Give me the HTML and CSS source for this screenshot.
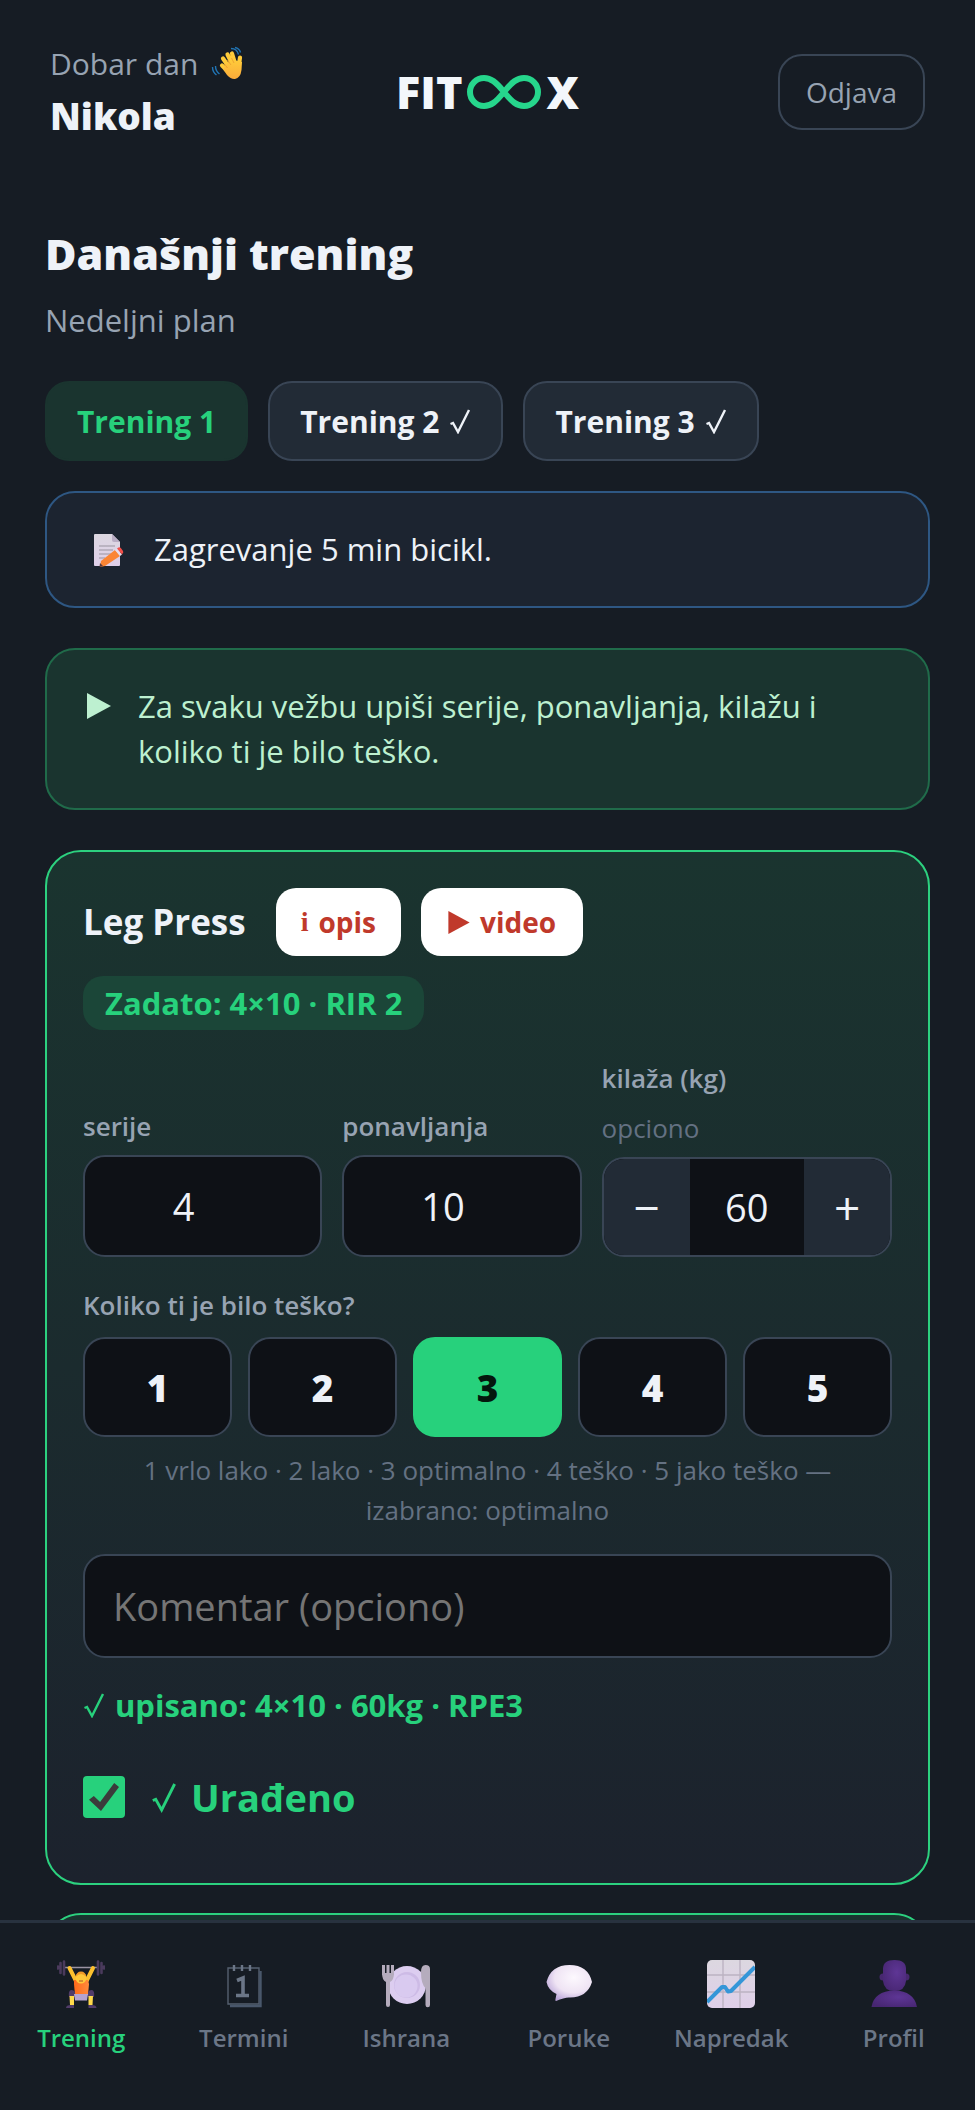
FILE: index.html
```html
<!DOCTYPE html>
<html lang="sr-Latn">
<head>
<meta charset="utf-8">
<meta name="viewport" content="width=device-width, initial-scale=1">
<title>Fitoox – Današnji trening</title>
<link rel="stylesheet" href="styles.css">
</head>
<body>
<svg class="defs" aria-hidden="true">
  <defs>
    <symbol id="tick" viewBox="0 0 22 26"><path d="M1.500 16 4 15 9 24 20 2" fill="none" stroke="currentColor" stroke-width="2.400"/></symbol>
    <linearGradient id="hand" x1="0" y1="0" x2="0" y2="1"><stop offset="0" stop-color="#ffcb3a"/><stop offset="1" stop-color="#fbaa3a"/></linearGradient>
    <linearGradient id="shirt" x1="0" y1="0" x2="1" y2="0"><stop offset="0" stop-color="#ff6a1a"/><stop offset="1" stop-color="#ff8b3d"/></linearGradient>
    <linearGradient id="paper" x1="0" y1="0" x2="0" y2="1"><stop offset="0" stop-color="#dcd7e0"/><stop offset="1" stop-color="#dfcfe9"/></linearGradient>
    <radialGradient id="bubble" cx=".6" cy=".35" r=".7"><stop offset="0" stop-color="#fdf9fe"/><stop offset=".6" stop-color="#efe4f4"/><stop offset="1" stop-color="#b9a4d8"/></radialGradient>
    <radialGradient id="bust" cx=".6" cy=".4" r=".7"><stop offset="0" stop-color="#5e3695"/><stop offset="1" stop-color="#472672"/></radialGradient>
  </defs>
</svg>
<div class="app">
  <header class="top">
    <div class="greeting">
      <p class="hello">Dobar dan
        <svg class="wave" viewBox="0 0 32 32" role="img" aria-label="Mahanje">
          <path d="m12 17.500 7 7M13 10.500l7 10M17.500 6.500l6 12M22 5.500l4 13M30 9.500 28.500 20" fill="none" stroke="#ffcb3a" stroke-width="4.200" stroke-linecap="round"/>
          <path d="m15 17 6-5 8 1 3 1-.5 8q-1 8-6.500 9-4 .5-8-4l-3.500-5Z" fill="url(#hand)"/>
          <path d="m14.500 16 3 4M17.500 12l3.500 5M21.500 10l2.500 5" fill="none" stroke="#eda030" stroke-width=".9"/>
          <path d="M21 .500q6 0 7.500 6M25-.500q4.500 1 5.500 5M5.500 18q0 5 4 8M2.500 19q0 5 4 8" fill="none" stroke="#2175b5" stroke-width="1.400"/>
        </svg>
      </p>
      <p class="name">Nikola</p>
    </div>
    <div class="logo" aria-label="FITOOX">
      <span>FIT</span>
      <svg class="loop" viewBox="0 0 76 34" aria-hidden="true"><path d="M38 17C30 7 25 3 18 3a14 14 0 0 0 0 28C25 31 30 27 38 17S51 3 58 3a14 14 0 0 1 0 28C51 31 46 27 38 17Z" fill="none" stroke="#26d68c" stroke-width="6"/></svg>
      <span>X</span>
    </div>
    <button class="logout" type="button">Odjava</button>
  </header>

  <main class="content">
    <h1>Današnji trening</h1>
    <p class="sub">Nedeljni plan</p>
    <div class="tabs">
      <button class="tab active" type="button">Trening 1</button>
      <button class="tab" type="button">Trening 2 <svg class="tick"><use href="#tick"/></svg></button>
      <button class="tab" type="button">Trening 3 <svg class="tick"><use href="#tick"/></svg></button>
    </div>

    <section class="note">
      <svg class="memo" viewBox="0 0 32 36" aria-hidden="true">
        <path d="M3 2h17l8 8v23q0 1-1 1H3q-1 0-1-1V3q0-1 1-1Z" fill="url(#paper)"/>
        <path d="M20 2v6q0 2 2 2h6Z" fill="#b9adc4"/>
        <path d="M7 14h16M7 18h14M7 22h12M7 26h6" stroke="#9a94a0" stroke-width="1.200"/>
        <path d="M9 29 23 18l5 6-15 10-5 1Z" fill="#fb8534"/><path d="m23 18 2-1.500 5 6L28 24Z" fill="#e8ddea"/><path d="m25 16.500 1.500-1q1.500-.5 2.500.8l2 2.700q.8 1.500-.5 2.500L30 22.500Z" fill="#f3504a"/><path d="m8 31 3 3-3.500 1Z" fill="#5c3b3b"/>
      </svg>
      <p>Zagrevanje 5 min bicikl.</p>
    </section>

    <section class="tip">
      <svg class="play" viewBox="0 0 24 26" aria-hidden="true"><path d="M0 0 24 13 0 26Z" fill="currentColor"/></svg>
      <p>Za svaku vežbu upiši serije, ponavljanja, kilažu i koliko ti je bilo teško.</p>
    </section>

    <article class="card">
      <div class="title">
        <h2>Leg Press</h2>
        <button class="chip" type="button"><span class="i">i</span> opis</button>
        <button class="chip video" type="button"><svg class="play-small" viewBox="0 0 24 26" aria-hidden="true"><path d="M0 0 24 13 0 26Z" fill="currentColor"/></svg>video</button>
      </div>
      <p class="target">Zadato: 4×10 · RIR 2</p>

      <div class="fields">
        <div class="field">
          <label for="sets">serije</label>
          <input class="box number" id="sets" type="text" inputmode="numeric" value="4">
        </div>
        <div class="field">
          <label for="reps">ponavljanja</label>
          <input class="box number" id="reps" type="text" inputmode="numeric" value="10">
        </div>
        <div class="field">
          <label for="kg">kilaža (kg)<span class="optional">opciono</span></label>
          <div class="stepper">
            <button type="button" aria-label="Manje">−</button>
            <input id="kg" type="text" inputmode="decimal" value="60">
            <button type="button" aria-label="Više">+</button>
          </div>
        </div>
      </div>

      <p class="question">Koliko ti je bilo teško?</p>
      <div class="scale">
        <button type="button">1</button>
        <button type="button">2</button>
        <button class="picked" type="button">3</button>
        <button type="button">4</button>
        <button type="button">5</button>
      </div>
      <p class="legend">1 vrlo lako · 2 lako · 3 optimalno · 4 teško · 5 jako teško — izabrano: optimalno</p>
      <input class="box comment" type="text" placeholder="Komentar (opciono)" aria-label="Komentar (opciono)">
      <p class="saved"><svg class="tick"><use href="#tick"/></svg> upisano: 4×10 · 60kg · RPE3</p>
      <label class="done"><input type="checkbox" checked><span><svg class="tick"><use href="#tick"/></svg> Urađeno</span></label>
    </article>
    <article class="card"></article>
  </main>

  <nav class="nav">
    <a class="current" href="#trening">
      <svg viewBox="0 0 48 48" aria-hidden="true">
        <path d="M6 7.500h36" stroke="#9a93a3" stroke-width="1.600"/>
        <path d="M1 6.500v2M3.500 3v10M7 1.500v13M47 6.500v2M44.500 3v10M41 1.500v13" stroke="#4a3a5c" stroke-width="2.600" stroke-linecap="round"/>
        <path d="m12.500 8 6.500 13M36 8l-6.500 13" stroke="#fcc02e" stroke-width="4" stroke-linecap="round"/>
        <path d="M17 20h14l1 4-1 11H18l-1-11Z" fill="url(#shirt)"/>
        <circle cx="24" cy="18" r="5.500" fill="#ffc83a"/><path d="M18.500 17q1-5.500 5.500-5.500t5.500 5.500q-3-3-5.500-3t-5.500 3Z" fill="#f09b28"/><path d="M22 21h4" stroke="#a6542a"/>
        <path d="M12 37q-1-6 2-7 4 0 4 3v4ZM37 37q1-6-2-7-4 0-4 3v4Z" fill="#513c69"/>
        <path d="M17 34h14l-1 6.500H18Z" fill="#b6a3cf"/>
        <path d="M12.500 36h4.500v9h-4ZM36 36h-4.500v9h4Z" fill="#ffd94a"/>
        <path d="M9 48q0-3 5-3h3v3ZM39.500 48q0-3-5-3h-3v3Z" fill="#513c69"/>
      </svg>
      <span>Trening</span>
    </a>
    <a href="#termini">
      <svg viewBox="0 0 48 48" aria-hidden="true">
        <path d="M8 8h31v36H8Z" fill="none" stroke="#566070" stroke-width="1.400"/>
        <path d="M40.500 11v35H10" fill="none" stroke="#49576b" stroke-width="2.400"/>
        <path d="M14 5v6M22 5v6M30 5v6" stroke="#6b7687" stroke-width="2.400"/>
        <path d="M17 20.500 23 18v17M16 35.500h13" fill="none" stroke="#6b7687" stroke-width="3.600"/>
      </svg>
      <span>Termini</span>
    </a>
    <a href="#ishrana">
      <svg viewBox="0 0 48 48" aria-hidden="true">
        <circle cx="25" cy="25" r="19" fill="#dccdf0"/><circle cx="25" cy="25" r="13" fill="#cdbbe6"/><circle cx="24" cy="26" r="11.500" fill="#d9caf0"/>
        <path d="M1.500 5v10M6 5v10M10.500 5v10" stroke="#b5acbd" stroke-width="3"/><path d="M0 13h12q0 7-4 9v23a2 2 0 0 1-4 0V22q-4-2-4-9Z" fill="#b5acbd"/>
        <path d="M39 12q0-7 4.500-7T48 9v36a2 2 0 0 1-4.500 0V28Q39 24 39 12Z" fill="#b5acbd"/>
      </svg>
      <span>Ishrana</span>
    </a>
    <a href="#poruke">
      <svg viewBox="0 0 48 48" aria-hidden="true"><path d="M1.500 22Q6 5 24.500 5T47 22Q42 38 24 37.500q-5 0-13 3.500-1 0-.5-2l1-5Q3 30 1.500 22Z" fill="url(#bubble)"/></svg>
      <span>Poruke</span>
    </a>
    <a href="#napredak">
      <svg viewBox="0 0 48 48" aria-hidden="true"><rect width="48" height="48" rx="5" fill="url(#paper)"/><path d="M16 0v48M33 0v48M0 15h48M0 32h48" stroke="#bcb3c2" stroke-width="1.400"/><path d="M0 42 15 27l3 0 3 4.500 3-.5L48 7" fill="none" stroke="#3596d8" stroke-width="4" stroke-linejoin="round"/></svg>
      <span>Napredak</span>
    </a>
    <a href="#profil">
      <svg viewBox="0 0 48 48" aria-hidden="true"><circle cx="13" cy="17" r="3.500" fill="#47286f"/><circle cx="36" cy="17" r="3.500" fill="#47286f"/><path d="M13 9q0-9 11.500-9T36 9v12q-1 10-11.500 10T13 21Z" fill="url(#bust)"/><path d="M1.500 47Q4 31 24.500 30.500 44 31 47 47Z" fill="url(#bust)"/></svg>
      <span>Profil</span>
    </a>
  </nav>
</div>
</body>
</html>
```

FILE: styles.css
```css
* { box-sizing: border-box; }
body, h1, h2, p { margin: 0; }
body {
  background: #161c24;
  color: #eef2f8;
  font-family: "Open Sans", "Noto Sans", sans-serif;
}
button, input { font: inherit; color: inherit; }
button { cursor: pointer; }
.defs { position: absolute; width: 0; height: 0; }

.app { display: flex; flex-direction: column; height: 100vh; }

.top {
  display: grid;
  grid-template-columns: 1fr auto 1fr;
  align-items: center;
  padding: 40px 50px 0;
}
.hello { display: flex; align-items: center; gap: 12px; font-size: 30px; line-height: 48px; color: #97a3b2; }
.wave { width: 32px; height: 32px; overflow: visible; }
.name { font-size: 37px; line-height: 56px; font-weight: 800; }
.logo { display: flex; align-items: center; gap: 4px; font-size: 45px; line-height: 48px; font-weight: 800; color: #f3f7fb; }
.loop { width: 76px; height: 34px; }
.logout {
  justify-self: end;
  padding: 0 26px;
  height: 76px;
  font-size: 28px;
  color: #97a3b2;
  background: none;
  border: 2px solid #394555;
  border-radius: 24px;
}

.content {
  flex: 1;
  min-height: 0;
  overflow: hidden;
  padding: 78px 45px 0;
}
h1 { font-size: 43px; line-height: 64px; font-weight: 800; }
.sub { margin-top: 10px; font-size: 31px; line-height: 48px; color: #97a3b2; }
.tabs { display: flex; gap: 20px; margin: 37px 0 30px; }
.tab {
  display: flex;
  align-items: center;
  gap: 10px;
  height: 80px;
  padding: 0 30px;
  font-size: 30px;
  font-weight: 700;
  background: #222b36;
  border: 2px solid #394555;
  border-radius: 24px;
}
.tab.active { color: #27d17c; background: #1a342f; border-color: #1a342f; }
.tick { width: 22px; height: 26px; }

.note, .tip {
  display: flex;
  padding: 34px 40px;
  font-size: 31px;
  line-height: 45px;
  border: 2px solid #2e5783;
  border-radius: 30px;
  background: #1c2430;
}
.note { gap: 30px; margin-bottom: 40px; align-items: center; }
.tip { gap: 27px; color: #bdf0d0; border-color: #206b4a; background: #1a342f; }
.memo { width: 32px; height: 36px; margin-left: 5px; }
.play { flex: none; width: 24px; height: 26px; margin-top: 9px; }

.card {
  margin-top: 40px;
  padding: 36px;
  border: 2px solid #2cd17f;
  border-radius: 36px;
  background: linear-gradient(#1a342f, #1c222d);
}
.card + .card { margin-top: 28px; }
.title { display: flex; align-items: center; gap: 20px; }
h2 { margin-right: 10px; font-size: 35px; line-height: 50px; font-weight: 700; }
.chip {
  display: flex;
  align-items: center;
  gap: 10px;
  height: 68px;
  padding: 0 25px;
  font-size: 28px;
  font-weight: 700;
  color: #c0392b;
  background: #fff;
  border: 0;
  border-radius: 20px;
}
.video { padding: 0 27px; }
.i { font-family: "Liberation Serif", serif; }
.play-small { width: 22px; height: 23px; }
.target {
  width: fit-content;
  margin-top: 20px;
  padding: 0 22px;
  font-size: 31px;
  line-height: 54px;
  font-weight: 700;
  color: #27d17c;
  background: #1b4638;
  border-radius: 20px;
}

.fields { display: grid; grid-template-columns: 239fr 239fr 290fr; gap: 20px; align-items: end; margin-top: 28px; }
.field { display: flex; flex-direction: column; gap: 9px; min-width: 0; }
.field label, .question { font-size: 26px; line-height: 40px; font-weight: 600; color: #97a3b2; }
.optional { display: block; margin-top: 10px; font-weight: 400; color: #647182; }
.box, .stepper {
  width: 100%;
  height: 102px;
  border: 2px solid #394555;
  border-radius: 22px;
  background: #0e1116;
}
.box { padding: 0 28px; font-size: 38px; }
.number { padding-right: 66px; text-align: center; }
.stepper { display: grid; grid-template-columns: 3fr 4fr 3fr; height: 100px; overflow: hidden; }
.stepper input { width: 100%; min-width: 0; padding: 0; font-size: 38px; text-align: center; background: none; border: 0; }
.stepper button { padding: 0; font-size: 46px; line-height: 60px; font-weight: 500; background: #222b36; border: 0; }

.question { margin-top: 28px; }
.scale { display: grid; grid-template-columns: repeat(5, 1fr); gap: 16px; margin-top: 12px; }
.scale button { height: 100px; font-size: 37px; font-weight: 800; background: #0e1116; border: 2px solid #394555; border-radius: 22px; }
.scale .picked { color: #04170d; background: #27d17c; border-color: #27d17c; }
.legend { margin: 13px 0 24px; padding: 0 40px; font-size: 26px; line-height: 40px; text-align: center; color: #647182; }
.comment { height: 104px; }
.comment::placeholder { color: #757575; opacity: 1; }
.saved { display: flex; align-items: center; gap: 10px; margin-top: 23px; font-size: 31px; line-height: 48px; font-weight: 700; color: #27d17c; }
.done { display: flex; align-items: center; gap: 26px; margin: 40px 0 22px; font-size: 38px; line-height: 56px; font-weight: 700; color: #27d17c; }
.done span { display: flex; align-items: center; gap: 14px; }
.done .tick { width: 26px; height: 32px; }
.done input {
  appearance: none;
  width: 42px;
  height: 42px;
  margin: 0;
  border-radius: 4px;
  background: #27d17c;
  display: grid;
  place-items: center;
}
.done input::before {
  content: "";
  width: 30px;
  height: 28px;
  background: #3b3b3b;
  clip-path: polygon(0 60%, 16% 46%, 37% 68%, 84% 0, 100% 14%, 40% 100%);
}

.nav {
  display: grid;
  grid-template-columns: repeat(6, 1fr);
  height: 190px;
  padding-top: 37px;
  border-top: 3px solid #28323f;
  background: #161c24;
}
.nav a { display: flex; flex-direction: column; align-items: center; gap: 10px; font-size: 24px; line-height: 40px; font-weight: 600; color: #6b7687; text-decoration: none; }
.nav svg { width: 48px; height: 48px; }
.nav .current { color: #27d17c; }
```
